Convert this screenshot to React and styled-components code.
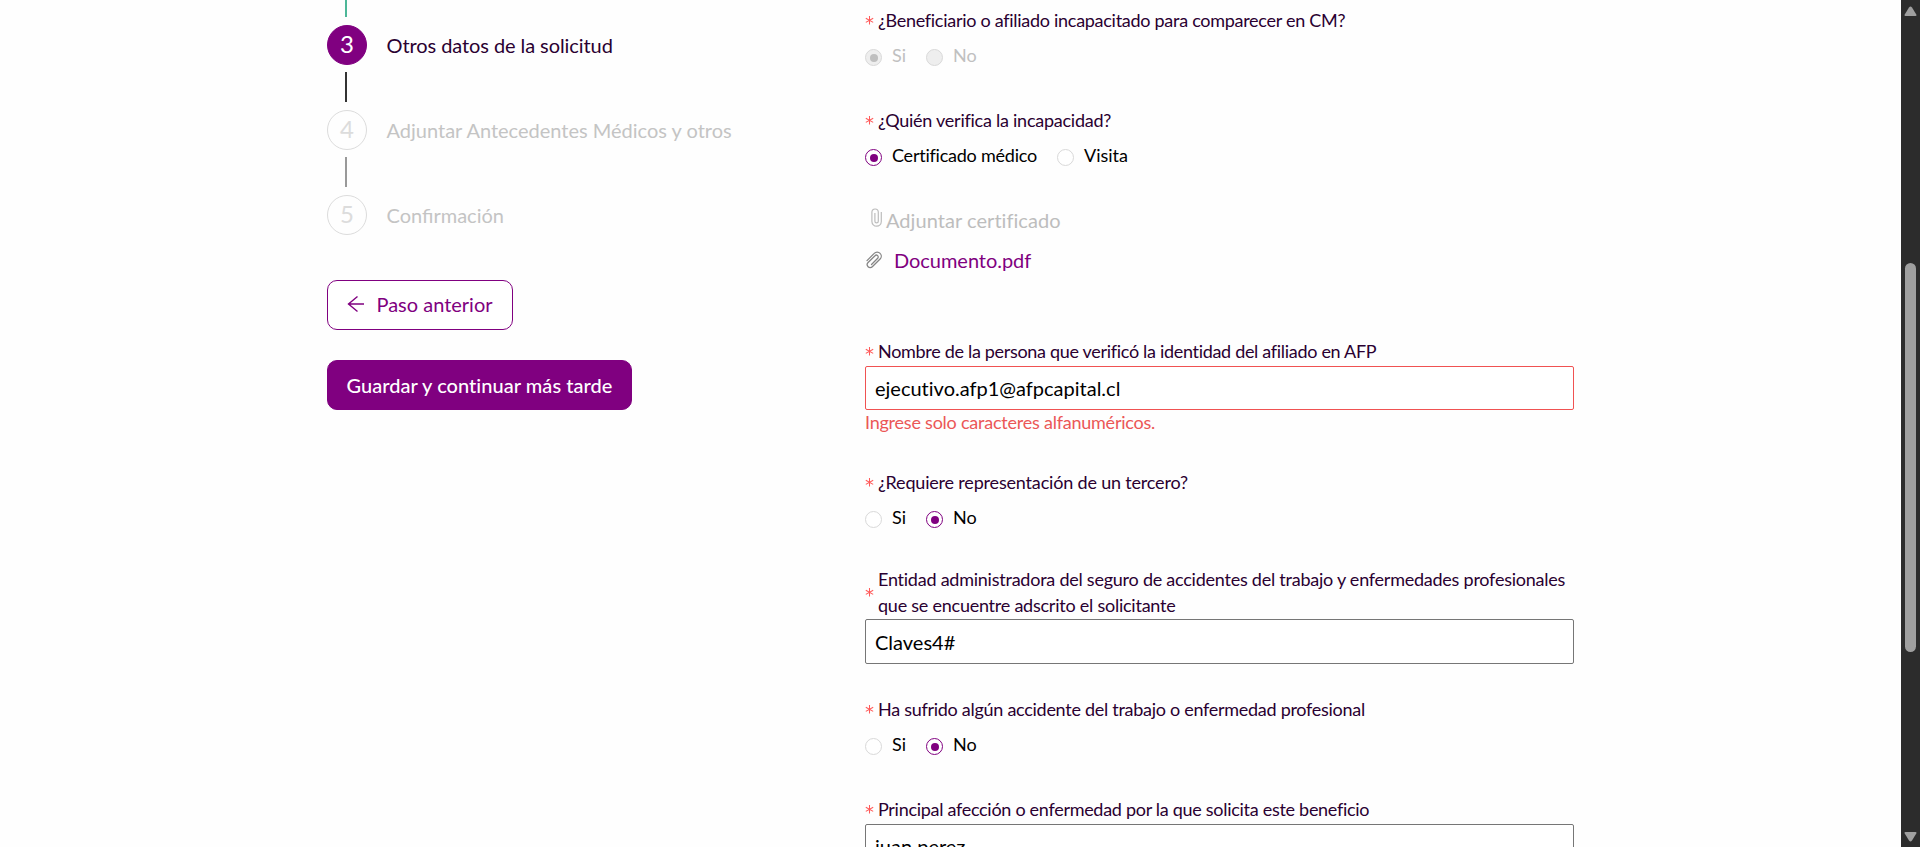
import React from "react";
import styled, { createGlobalStyle, css } from "styled-components";

const GlobalStyle = createGlobalStyle`
  *, *::before, *::after { box-sizing: border-box; }
  html, body { margin: 0; padding: 0; height: 847px; overflow: hidden; background: #fefefe; }
  body { font-family: Lato, "Liberation Sans", sans-serif; color: #2a0031; }
`;

const Page = styled.div`
  display: flex;
  width: 1920px;
  height: 847px;
  overflow: hidden;
`;

const Sidebar = styled.aside`
  width: 538px;
  margin-left: 327px;
  flex: none;
`;

const Connector = styled.div`
  width: 2px;
  height: ${(p) => p.$height || 30}px;
  margin: ${(p) => (p.$height ? "0 0 8px 18px" : "7px 0 8px 18px")};
  background: ${(p) => p.$color};
`;

const Step = styled.div`
  display: flex;
  align-items: center;
  gap: 19.5px;
  height: 40px;
  font-size: 20px;
  color: ${(p) => (p.$active ? "#2a0031" : "#c4c4c4")};
`;

const StepNumber = styled.span`
  width: 40px;
  height: 40px;
  border-radius: 50%;
  border: 1px solid #dcdcdc;
  color: #dcdcdc;
  font-size: 24px;
  line-height: 36px;
  text-align: center;
  ${(p) =>
    p.$active &&
    css`
      background: #800080;
      border-color: #800080;
      color: #fff;
    `}
`;

const StepLabel = styled.span`
  line-height: 24px;
  letter-spacing: ${(p) => (p.$active ? "-0.08px" : "normal")};
`;

const Actions = styled.div`
  display: flex;
  flex-direction: column;
  align-items: flex-start;
  gap: 30px;
  margin-top: 45px;
`;

const Button = styled.button`
  display: flex;
  align-items: center;
  justify-content: center;
  gap: 12px;
  width: ${(p) => p.$width}px;
  height: 50px;
  padding: ${(p) => (p.$solid ? "0" : "0 0 2px")};
  border: 1px solid #800080;
  border-radius: 10px;
  background: ${(p) => (p.$solid ? "#800080" : "#fff")};
  color: ${(p) => (p.$solid ? "#fff" : "#800080")};
  font: ${(p) => (p.$solid ? 500 : 400)} 20px/24px Lato, sans-serif;
  font-variant-ligatures: none;
  letter-spacing: ${(p) => (p.$solid ? "0.04px" : "normal")};
`;

const Form = styled.main`
  width: 709px;
  padding-top: 7px;
  flex: none;
`;

const Field = styled.div`
  height: ${(p) => p.$height}px;
`;

const Label = styled.div`
  display: flex;
  align-items: center;
  gap: 4px;
  font-size: 18px;
  line-height: 26px;
  letter-spacing: ${(p) => p.$tracking}px;
  color: #2a0031;
  svg { flex: none; }
`;

const RadioRow = styled.div`
  display: flex;
  gap: 20px;
  margin-top: 11px;
`;

const Option = styled.label`
  display: flex;
  gap: 10px;
  height: 26px;
  font-size: 18px;
  line-height: 22px;
  letter-spacing: ${(p) => (p.$long ? "-0.23px" : "normal")};
  color: ${(p) => (p.$disabled ? "#c0c0c0" : "#000")};
`;

const Dot = styled.span`
  display: flex;
  align-items: center;
  justify-content: center;
  width: 17px;
  height: 17px;
  margin-top: 5px;
  border-radius: 50%;
  border: 1px solid ${(p) => (p.$checked && !p.$disabled ? "#800080" : "#d9d9d9")};
  background: ${(p) => (p.$disabled ? "#eee" : "#fff")};
  &::after {
    content: "";
    display: ${(p) => (p.$checked ? "block" : "none")};
    width: 8px;
    height: 8px;
    border-radius: 50%;
    background: ${(p) => (p.$disabled ? "#bfbfbf" : "#800080")};
  }
`;

const Input = styled.input`
  display: block;
  width: 709px;
  height: ${(p) => p.$height || 44}px;
  margin-top: ${(p) => p.$offset || 1}px;
  padding: 0 9px;
  border: 1px solid ${(p) => (p.$error ? "#f05252" : "#767676")};
  border-radius: 2px;
  background: #fff;
  color: #000;
  font: 20px/24px Lato, sans-serif;
  font-variant-ligatures: none;
  outline: none;
`;

const ErrorText = styled.div`
  margin-top: -1px;
  font-size: 18px;
  line-height: 26px;
  letter-spacing: -0.23px;
  color: #eb5757;
`;

const Attach = styled.div`
  display: flex;
  align-items: center;
  height: 40px;
  font-size: 20px;
  font-variant-ligatures: none;
  letter-spacing: ${(p) => (p.$link ? "-0.04px" : "0.05px")};
  color: ${(p) => (p.$link ? "#800080" : "#bdbdbd")};
  gap: ${(p) => (p.$link ? 12 : 4)}px;
  padding-left: ${(p) => (p.$link ? 1 : 6)}px;
  svg { flex: none; margin-bottom: ${(p) => (p.$link ? 1 : 6)}px; }
`;

const Scrollbar = styled.div`
  display: flex;
  flex-direction: column;
  align-items: center;
  width: 19px;
  height: 847px;
  margin-left: auto;
  padding: 6px 0 5px;
  background: #2c2c2c;
  flex: none;
`;

const Thumb = styled.div`
  width: 11px;
  height: 389px;
  margin: 247px 0 auto;
  border-radius: 6px;
  background: #9f9f9f;
`;

const Asterisk = () => (
  <svg width="9" height="10" viewBox="0 0 9 10" fill="none" stroke="#ff5a5a" strokeWidth="1.05">
    <path d="M4.5 1v8.500M.8 3.200l7.400 4.200M8.200 3.200l-7.400 4.200" />
  </svg>
);

const ArrowLeft = () => (
  <svg width="17" height="18" viewBox="0 0 17 18" fill="none" stroke="#800080" strokeWidth="1.4">
    <path d="M1 9h16M10.500 1.500L1.500 9l9 7.500" />
  </svg>
);

const UprightClip = () => (
  <svg width="11" height="19" viewBox="0 0 11 19" fill="none" stroke="#bdbdbd" strokeWidth="1.200">
    <path d="M10.300 4v9.500a4.700 4.700 0 0 1-9.400 0V4.200a3.200 3.200 0 0 1 6.400 0v9a1.700 1.700 0 0 1-3.400 0V5" />
  </svg>
);

const TiltedClip = () => (
  <svg width="16" height="18" viewBox="0 0 16 18" fill="none" stroke="#858585" strokeWidth="1.250" strokeLinecap="round">
    <path d="M1 9.600L8.200 2.400a4 4 0 0 1 5.900 0a4 4 0 0 1 0 5.600L6.300 15.700a2.900 2.900 0 0 1-4.200 0a3 3 0 0 1 0-4.200L9 4.700a1.800 1.800 0 0 1 2.700 2.600L5.500 13.500" />
  </svg>
);

const ScrollArrow = ({ down }) => (
  <svg width="13" height="10" viewBox="0 0 13 10" fill="#9f9f9f">
    <path d={down ? "M1.500 0h10q1.500 0 .8 1.500L8 8.600q-1.500 1.800-3 0L.7 1.500Q0 0 1.500 0Z" : "M1.500 10h10q1.500 0 .8-1.500L8 1.400q-1.500-1.800-3 0L.7 8.500Q0 10 1.500 10Z"} />
  </svg>
);

const Required = ({ children, tracking = -0.28 }) => (
  <Label $tracking={tracking}>
    <Asterisk />
    <span>{children}</span>
  </Label>
);

const Radios = ({ options, selected, disabled }) => (
  <RadioRow>
    {options.map((text, i) => (
      <Option key={text} $disabled={disabled} $long={text.length > 6}>
        <Dot $checked={i === selected} $disabled={disabled} />
        <span>{text}</span>
      </Option>
    ))}
  </RadioRow>
);

const StepItem = ({ number, label, active }) => (
  <Step $active={active}>
    <StepNumber $active={active}>{number}</StepNumber>
    <StepLabel $active={active}>{label}</StepLabel>
  </Step>
);

export default function App() {
  return (
    <>
      <GlobalStyle />
      <Page>
        <Sidebar>
          <Connector $height={17} $color="#4db798" />
          <StepItem number={3} label="Otros datos de la solicitud" active />
          <Connector $color="#333" />
          <StepItem number={4} label="Adjuntar Antecedentes Médicos y otros" />
          <Connector $color="#999" />
          <StepItem number={5} label="Confirmación" />
          <Actions>
            <Button $width={186}>
              <ArrowLeft />
              Paso anterior
            </Button>
            <Button $width={305} $solid>
              Guardar y continuar más tarde
            </Button>
          </Actions>
        </Sidebar>
        <Form>
          <Field $height={100}>
            <Required tracking={-0.28}>¿Beneficiario o afiliado incapacitado para comparecer en CM?</Required>
            <Radios options={["Si", "No"]} selected={0} disabled />
          </Field>
          <Field $height={93}>
            <Required tracking={-0.25}>¿Quién verifica la incapacidad?</Required>
            <Radios options={["Certificado médico", "Visita"]} selected={0} />
          </Field>
          <Field $height={138}>
            <Attach>
              <UprightClip />
              <span>Adjuntar certificado</span>
            </Attach>
            <Attach $link>
              <TiltedClip />
              <span>Documento.pdf</span>
            </Attach>
          </Field>
          <Field $height={131}>
            <Required tracking={-0.31}>Nombre de la persona que verificó la identidad del afiliado en AFP</Required>
            <Input $error $offset={2} readOnly value="ejecutivo.afp1@afpcapital.cl" />
            <ErrorText>Ingrese solo caracteres alfanuméricos.</ErrorText>
          </Field>
          <Field $height={97}>
            <Required tracking={-0.18}>¿Requiere representación de un tercero?</Required>
            <Radios options={["Si", "No"]} selected={1} />
          </Field>
          <Field $height={130}>
            <Required tracking={-0.24}>
              Entidad administradora del seguro de accidentes del trabajo y enfermedades profesionales que se encuentre
              adscrito el solicitante
            </Required>
            <Input $height={45} readOnly value="Claves4#" />
          </Field>
          <Field $height={100}>
            <Required tracking={-0.28}>Ha sufrido algún accidente del trabajo o enfermedad profesional</Required>
            <Radios options={["Si", "No"]} selected={1} />
          </Field>
          <Field $height={80}>
            <Required tracking={-0.29}>Principal afección o enfermedad por la que solicita este beneficio</Required>
            <Input $offset={2} readOnly value="juan perez" />
          </Field>
        </Form>
        <Scrollbar>
          <ScrollArrow />
          <Thumb />
          <ScrollArrow down />
        </Scrollbar>
      </Page>
    </>
  );
}
